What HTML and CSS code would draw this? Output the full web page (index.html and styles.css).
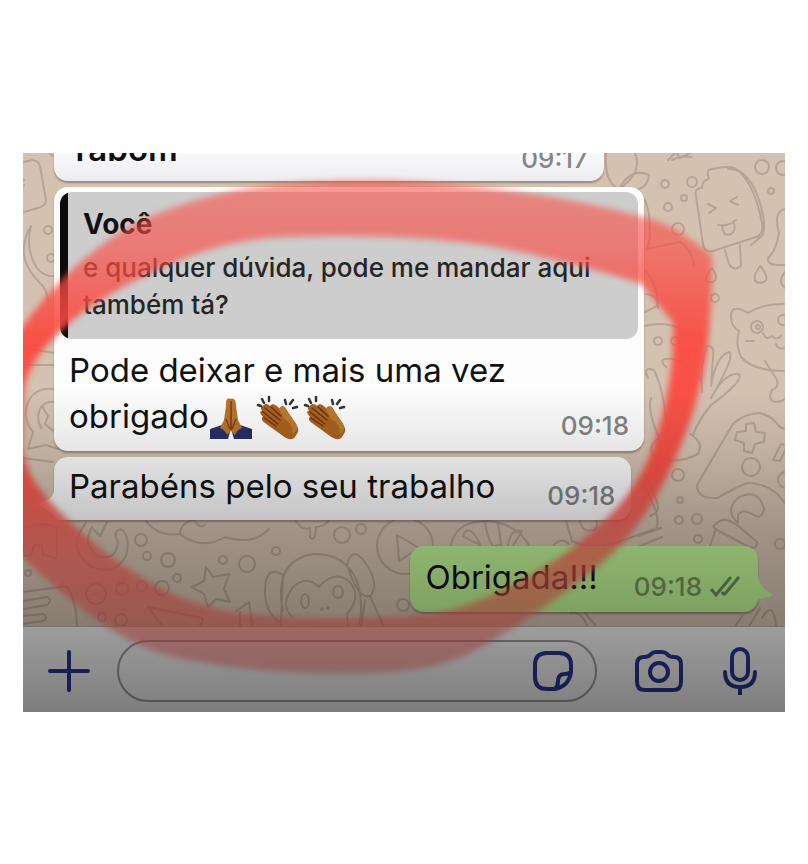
FILE: index.html
```html
<!DOCTYPE html>
<html lang="pt-BR">
<head>
  <meta charset="UTF-8">
  <meta name="viewport" content="width=device-width, initial-scale=1.0">
  <title>Conversa</title>
  <link rel="stylesheet" href="styles.css">
</head>
<body>
  <!-- emojis reused in the messages -->
  <svg class="defs" width="0" height="0" aria-hidden="true">
    <symbol id="pray" viewBox="0 0 44 44">
      <path d="M1 33l12-4 8 7-2 7H1zM43 33l-12-4-8 7 2 7h18z" fill="#293064"/>
      <path d="M21 3c-4-2-4 3-4 7l-2 14-4 8c3 1 6 4 7 7l4-4 4 4c1-3 4-6 7-7l-4-8-2-14c0-4-1-9-6-7z" fill="#b8752b"/>
      <path d="M22 5v29M17 23l4 10M27 23l-4 10" fill="none" stroke="#7f3d18" stroke-width="1.5"/>
    </symbol>
    <symbol id="clap" viewBox="0 0 44 44">
      <path d="M7 10c2-3 5-2 7 0 2-3 5-2 8 1l2 2c1-4 5-3 6 0l8 13c3 4 5 6 4 10l-3 5c-3 4-8 2-12-1L9 27c-3-2-4-5-2-6-3-3-4-6-1-6-2-3-1-5 1-5z" fill="#a9631f"/>
      <path d="M9 12l15 12M7 16l15 12M8 22l12 8M15 11l10 9" fill="none" stroke="#6e3014" stroke-width="1.5" stroke-linecap="round"/>
      <path d="M23 13l5 10c6 3 10 9 8 15 5-2 7-7 3-12l-9-13c-1-3-5-4-7 0z" fill="#bc792e"/>
      <path d="M2 9l3 1M6 3l2 4M13 1l0 4M29 4l1 4M37 4l-3 4M41 11l-4 1" stroke="#333" stroke-width="2.5" stroke-linecap="round"/>
    </symbol>
  </svg>

  <main class="chat">
    <svg class="wallpaper" viewBox="23 153 762 559" preserveAspectRatio="xMidYMin slice" aria-hidden="true">
      <!-- tag, moon, speech bubble -->
      <path d="M20 163l12-3q6 0 8 6l6 34q0 5-5 7l-20 6M24 180a4 4 0 1 0 0 5M50 153q2 5 8 1"/>
      <path d="M31 226q-6 24 6 42 7 10 22 8M31 226q-10 16-6 34 4 12 14 22 9 8 9 20"/>
      <path d="M23 365h36M23 348l38 6M23 458l30 4M57 390c-28-8-40 24-24 42l-5 17 18-4 12 4M55 402c-16-2-20 14-14 26M42 406l6 10-3 8 12 10"/>
      <circle cx="48" cy="230" r="4"/><circle cx="51" cy="258" r="4"/>
      <!-- tulip, ice lolly -->
      <path d="M606 153q-2 30 13 36 24-16 16-36M619 189q12-22 30-14-2 20-30 14l-5 22M668 160l8-8 4 6 10-5M672 160q8-4 20-3"/>
      <path d="M696 196q-2-8 6-8 0-8 7-9-4-11 4-10 20-5 27 3 15 15 22 51 2 12-6 14l-43 14q-9 2-10-7l-7-48M728 169q18-1 29 25 10 28 6 41l-12 10M725 250l4 14q5 8 12 2l-1-21"/>
      <path d="M708 204l8 4-7 5M737 197l-7 4 8 4M718 225q10 2 18-5M722 225q1 13 9 9 5-3 3-11"/>
      <circle cx="762" cy="167" r="7"/><circle cx="783" cy="168" r="7"/><circle cx="692" cy="182" r="5"/><circle cx="665" cy="184" r="4"/><circle cx="684" cy="198" r="3"/><circle cx="668" cy="207" r="4"/><circle cx="678" cy="229" r="6"/><circle cx="771" cy="191" r="3"/>
      <path d="M645 200q8 20 3 48M646 249l34-7q12 8 14 24M645 270q14 16 12 36l-12 6M645 326q18-5 34 2M646 294q14 2 12 14M785 209q-12 2-6 24-3 18-11 25-2 8 17 7"/>
      <path d="M712 268q-12 16 0 14 8-2 0-14zM760 266q-11 16 0 17 13-2 0-17zM785 272q-8 10 0 16"/>
      <circle cx="715" cy="298" r="4"/><circle cx="658" cy="341" r="4"/><circle cx="675" cy="341" r="4"/>
      <!-- cat -->
      <path d="M785 304q-22-1-37 9-15-9-17 1-1 12 8 17-4 12 2 26 12 14 44 14M785 348q-7 2-9-4M763 333q3 8 9 3 4 5 9 0M746 341l8 0M765 361l12 19q2 8-5 10-5 10 3 12 7 0 10-3"/>
      <circle cx="757" cy="327" r="6"/><circle cx="783" cy="320" r="5"/><circle cx="758" cy="327" r="2"/>
      <!-- flower with leaves -->
      <path d="M648 378q-6-12 6-8 9 18 12 50M666 367q-10-10 7-8 16 5 28 21M702 392q-2-28 5-46 8-1 6 12l-2 28q5-30 18-34 7 3-18 46 14-26 28-24 5 7-28 31-12 14-18 30M651 398q-4 12 8 40-12 8-6 18 22 10 45-2 6-12-8-20"/>
      <!-- game pad -->
      <path d="M697 485l34-58q8-12 28-14 12 2 19 12 4 4 7 4M697 485q0 14 20 13 18-10 30-15 24 0 38 20"/>
      <path d="M746 424l8-1 2 9 9 1-1 9-9 2-3 9-8-2 0-8-9-3 2-8 9-1zM773 460l8-16 6 2-7 15z"/>
      <circle cx="751" cy="467" r="9"/><circle cx="786" cy="480" r="8"/>
      <!-- mushroom, drum, camera -->
      <path d="M738 523q-14-12 0-25 20-11 26 11-2 12-12 5-10-6-14 1zM715 525q8-10 22 0l20 17q0 8-8 5l-32-17q-6-4-2-5zM716 529l-6 17M750 548l-2 16"/>
      <path d="M566 521l6 20q22 10 52-1l33-12q2-12-4-24l-9-20M580 521q2 12 14 9 5-4 2-9M639 536l22-8M640 546l22-9M645 474l12 28q4 10-7 14"/>
      <circle cx="678" cy="475" r="6"/><circle cx="680" cy="500" r="3"/><circle cx="679" cy="520" r="4"/><circle cx="697" cy="519" r="5"/><circle cx="698" cy="539" r="4"/><circle cx="780" cy="544" r="5"/>
      <path d="M553 546q8-10 16-2M570 613q10-4 18 14M585 613l12 14M760 608l-12 20M762 618q12-20 14 10M742 616l-8 12"/>
      <!-- play button, fruit -->
      <circle cx="405" cy="546" r="28"/>
      <path d="M397 535l22 13-20 13zM450 548q5-28 38-27 30 3 42 26M463 536q6-15 18 10zM485 522q2 16 8 24l8-1-3-22M508 546q2-18 14-15l-9 15"/>
      <circle cx="342" cy="535" r="8"/><circle cx="361" cy="529" r="5"/><circle cx="403" cy="605" r="6"/>
      <path d="M296 521q6 10 14 7v9q3 4 5-1l1-9q10-1 12-6M146 521q12 16 34 13 1-12 14-14M180 534q22 17 45 3 28 9 44-8M195 521q4 8 10 4"/>
      <!-- monkey -->
      <path d="M283 611q-10-50 30-57 32-1 44 27 7 26 2 43M319 587q-12-12-25-1-15 18-2 31M319 587q15-18 31-5 12 15-3 32l1 14M347 565q5-20 17-4 16 22 7 34-12 7-24-30M370 596l14 31M365 600l-4 27M283 575q-19-12-18 20 2 20 16 28M283 575l-2 50"/>
      <ellipse cx="305" cy="601" rx="4" ry="7"/><ellipse cx="338" cy="592" rx="5" ry="6"/><circle cx="322" cy="609" r="1"/><circle cx="328" cy="608" r="1"/>
      <!-- star, ring, ticket -->
      <path d="M206 567l7 10 16-3-5 15 6 13-14-3-8 8-4-13-12-7 12-6z"/>
      <path d="M86 523q-20 24 3 42 24 13 37-9 5-20-5-27-9 2-3 13-2 20-21 14-15-12-5-29M92 528l8 8 7-14"/>
      <circle cx="141" cy="540" r="6"/><circle cx="147" cy="556" r="4"/><circle cx="168" cy="560" r="7"/><circle cx="177" cy="578" r="4"/><circle cx="162" cy="588" r="7"/><circle cx="142" cy="586" r="5"/><circle cx="122" cy="589" r="6"/><circle cx="96" cy="594" r="10"/><circle cx="223" cy="560" r="4"/><circle cx="247" cy="564" r="8"/><circle cx="276" cy="551" r="4"/><circle cx="28" cy="573" r="3"/><circle cx="102" cy="617" r="4"/><circle cx="121" cy="620" r="6"/>
      <path d="M23 592l44-6q10 16 10 40M23 601l24-4q6 3 0 8l-24 4M23 616l20-2q6 3 0 7l-20 3M23 556l8-1 3-10 8 1 1 9 14 3v-30l-10-4-22 3M148 607l54 11q2 4-3 9M148 607l14 18M236 611l13-9 3 24M240 612v15"/>
    </svg>

    <section class="messages">
      <article class="bubble bubble-first">
        <p class="text strong">Tabom</p>
        <time class="time">09:17</time>
      </article>

      <article class="bubble bubble-reply">
        <blockquote class="quote">
          <strong>Você</strong>
          <p>e qualquer dúvida, pode me mandar aqui também tá?</p>
        </blockquote>
        <div class="reply-body">
          <p class="text">Pode deixar e mais uma vez obrigado<svg class="emoji" role="img" aria-label="mãos unidas"><use href="#pray"/></svg><svg class="emoji" role="img" aria-label="palmas"><use href="#clap"/></svg><svg class="emoji" role="img" aria-label="palmas"><use href="#clap"/></svg></p>
          <time class="time">09:18</time>
        </div>
      </article>

      <article class="bubble">
        <svg class="tail tail-left" viewBox="0 0 28 38" aria-hidden="true"><path d="M16 0v10Q14 18 0 22q12 8 20 16h8V0z"/></svg>
        <p class="text">Parabéns pelo seu trabalho</p>
        <time class="time">09:18</time>
      </article>

      <article class="bubble bubble-sent">
        <svg class="tail tail-right" viewBox="0 0 28 38" aria-hidden="true"><path d="M12 0q0 14 16 21-10 3-15 4-5 10-13 12V0z"/></svg>
        <p class="text">Obrigada!!!</p>
        <time class="time">09:18</time>
        <svg class="ticks" viewBox="0 0 34 24" aria-label="lida" role="img"><path d="M3 15l5 6L23 3M16 21L31 3M14 18l2 3"/></svg>
      </article>
    </section>

    <form class="composer">
      <button type="button" class="icon-btn" aria-label="Anexar">
        <svg width="42" height="42" viewBox="0 0 42 42"><path d="M21 2v38M2 21h38"/></svg>
      </button>
      <div class="field">
        <input type="text" aria-label="Mensagem">
        <button type="button" class="icon-btn" aria-label="Figurinhas">
          <svg width="40" height="40" viewBox="0 0 40 40"><path d="M14 2h12q12 0 12 12v7Q36 35 22 38h-8Q2 38 2 26V14Q2 2 14 2zM22 38q3-3 3-8 0-7 7-7 4 0 6-2"/></svg>
        </button>
      </div>
      <button type="button" class="icon-btn" aria-label="Câmera">
        <svg width="48" height="42" viewBox="0 0 48 42"><path d="M9 7q5 0 7-3 2-2 5-2h6q3 0 5 2 2 3 7 3 7 0 7 7v18q0 8-8 8H10q-8 0-8-8V14q0-7 7-7z"/><circle cx="24" cy="22" r="9"/></svg>
      </button>
      <button type="button" class="icon-btn" aria-label="Gravar áudio">
        <svg width="34" height="48" viewBox="0 0 34 48"><rect x="9" y="2" width="16" height="31" rx="8"/><path d="M2 25q0 15 15 15t15-15M17 40v7"/></svg>
      </button>
    </form>

    <!-- hand-drawn red circle -->
    <svg class="marker" viewBox="23 153 762 559" preserveAspectRatio="xMidYMin slice" aria-hidden="true">
      <defs>
        <linearGradient id="ink" gradientUnits="userSpaceOnUse" x1="0" y1="180" x2="0" y2="675">
          <stop offset="0" stop-color="#fa4d45" stop-opacity=".55"/>
          <stop offset=".14" stop-color="#fa4d45" stop-opacity=".65"/>
          <stop offset=".32" stop-color="#fb4a40" stop-opacity=".93"/>
          <stop offset=".58" stop-color="#fb4a40" stop-opacity=".95"/>
          <stop offset=".75" stop-color="#fc5a50" stop-opacity=".72"/>
          <stop offset="1" stop-color="#ff6059" stop-opacity=".45"/>
        </linearGradient>
      </defs>
      <path fill="url(#ink)" fill-rule="evenodd" d="M10 345C45 292 95 235 170 209 225 188 280 181 370 180 480 182 590 201 650 219 680 228 695 243 712 256 712 345 703 390 683 440 664 488 640 530 602 563 570 590 530 618 500 636 460 662 430 671 370 673 300 675 230 670 170 656 110 640 60 592 10 546ZM24 390C30 350 80 304 160 269 200 249 240 239 285 237 360 234 440 238 490 246 550 257 605 272 642 284 655 300 664 312 673 322 675 370 664 420 648 460 630 500 605 522 570 550 530 578 490 600 440 613 380 620 280 620 225 611 165 599 110 560 70 522 40 492 25 475 22 445Z"/>
    </svg>
  </main>
</body>
</html>
```

FILE: styles.css
```css
* {
  box-sizing: border-box;
}

body {
  margin: 0;
  background: #fff;
  color: #111;
  font-family: Inter, "Liberation Sans", sans-serif;
}

.defs {
  position: absolute;
}

.chat {
  position: relative;
  margin: 153px 23px;
  overflow: hidden;
  background: #d4c2b1;
}

/* shadow that darkens the lower part of the screen */
.chat::after {
  content: "";
  position: absolute;
  inset: 0;
  background: linear-gradient(rgba(0,0,0,0) 42%, rgba(0,0,0,0.09) 53%, rgba(0,0,0,0.23) 66%, rgba(0,0,0,0.36) 85%, rgba(0,0,0,0.49));
  pointer-events: none;
}

.wallpaper,
.marker {
  position: absolute;
  top: 0;
  left: 0;
  width: 100%;
  height: 100%;
  pointer-events: none;
}

.wallpaper {
  fill: none;
  stroke: #b5a495;
  stroke-width: 2;
  stroke-linecap: round;
  stroke-linejoin: round;
}

.marker path {
  filter: blur(3px);
}

.messages {
  position: relative;
  display: flex;
  flex-direction: column;
  justify-content: flex-end;
  align-items: flex-start;
  gap: 6px;
  height: 473px;
  padding: 0 27px 14px 31px;
}

.bubble {
  position: relative;
  display: flex;
  flex-shrink: 0;
  align-items: flex-end;
  gap: 52px;
  max-width: 590px;
  padding: 6px 16px 11px 15px;
  border-radius: 14px;
  background: #fdfdfe;
  box-shadow: 0 2px 2px rgba(70,50,40,0.4);
}

.text {
  margin: 0;
  font-size: 33px;
  line-height: 46px;
}

.strong {
  font-weight: 600;
}

.time {
  color: #858588;
  font-size: 26px;
  font-weight: 500;
  line-height: 26px;
}

.bubble-first {
  justify-content: space-between;
  width: 550px;
  padding-bottom: 9px;
  background: linear-gradient(#fff 40%, #ececf0);
}

.bubble-reply {
  display: block;
  padding: 5px 6px 12px;
}

.quote {
  margin: 0;
  padding: 14px 14px 16px 23px;
  border-radius: 12px;
  background: linear-gradient(to right, #090c0b 8px, #cdcdcd 8px);
  font-size: 26px;
  line-height: 37px;
}

.quote strong {
  display: block;
  margin-bottom: 6px;
  font-size: 28px;
  font-weight: 700;
}

.quote p {
  margin: 0;
  color: #252525;
  font-weight: 500;
}

.reply-body {
  display: flex;
  justify-content: space-between;
  align-items: flex-end;
  padding: 8px 9px 0;
}

.emoji {
  width: 44px;
  height: 44px;
  margin: -4px 3px -4px 0;
  vertical-align: -8px;
}

.bubble-sent {
  align-self: flex-end;
  gap: 6px;
  margin-top: 20px;
  padding-top: 8px;
  padding-bottom: 12px;
  background: #c0f595;
}

.bubble-sent .text {
  margin-right: 30px;
}

.bubble-sent .time {
  color: #749659;
}

.tail {
  position: absolute;
  bottom: 0;
  width: 28px;
  height: 38px;
  fill: #fdfdfe;
}

.tail-left {
  left: -16px;
}

.tail-right {
  right: -16px;
  fill: #c0f595;
}

.ticks {
  width: 34px;
  height: 24px;
  margin-bottom: 2px;
  fill: none;
  stroke: #6c8b54;
  stroke-width: 3;
}

.composer {
  position: relative;
  display: flex;
  align-items: center;
  padding: 13px 28px 10px 25px;
  border-top: 1px solid #b9b4b0;
  background: #f5f5f6;
}

.icon-btn {
  display: flex;
  padding: 0;
  border: 0;
  background: none;
}

.icon-btn svg {
  fill: none;
  stroke: #2c3590;
  stroke-width: 4;
  stroke-linecap: round;
  stroke-linejoin: round;
}

.field {
  display: flex;
  flex: 1;
  align-items: center;
  min-width: 0;
  height: 62px;
  margin: 0 38px 0 27px;
  padding: 0 22px 0 24px;
  border: 2px solid #9b9b9b;
  border-radius: 31px;
}

.field input {
  flex: 1;
  min-width: 0;
  border: 0;
  outline: none;
  background: none;
  font: inherit;
  font-size: 26px;
}

.composer > .icon-btn:last-child {
  margin-left: 40px;
}
```
